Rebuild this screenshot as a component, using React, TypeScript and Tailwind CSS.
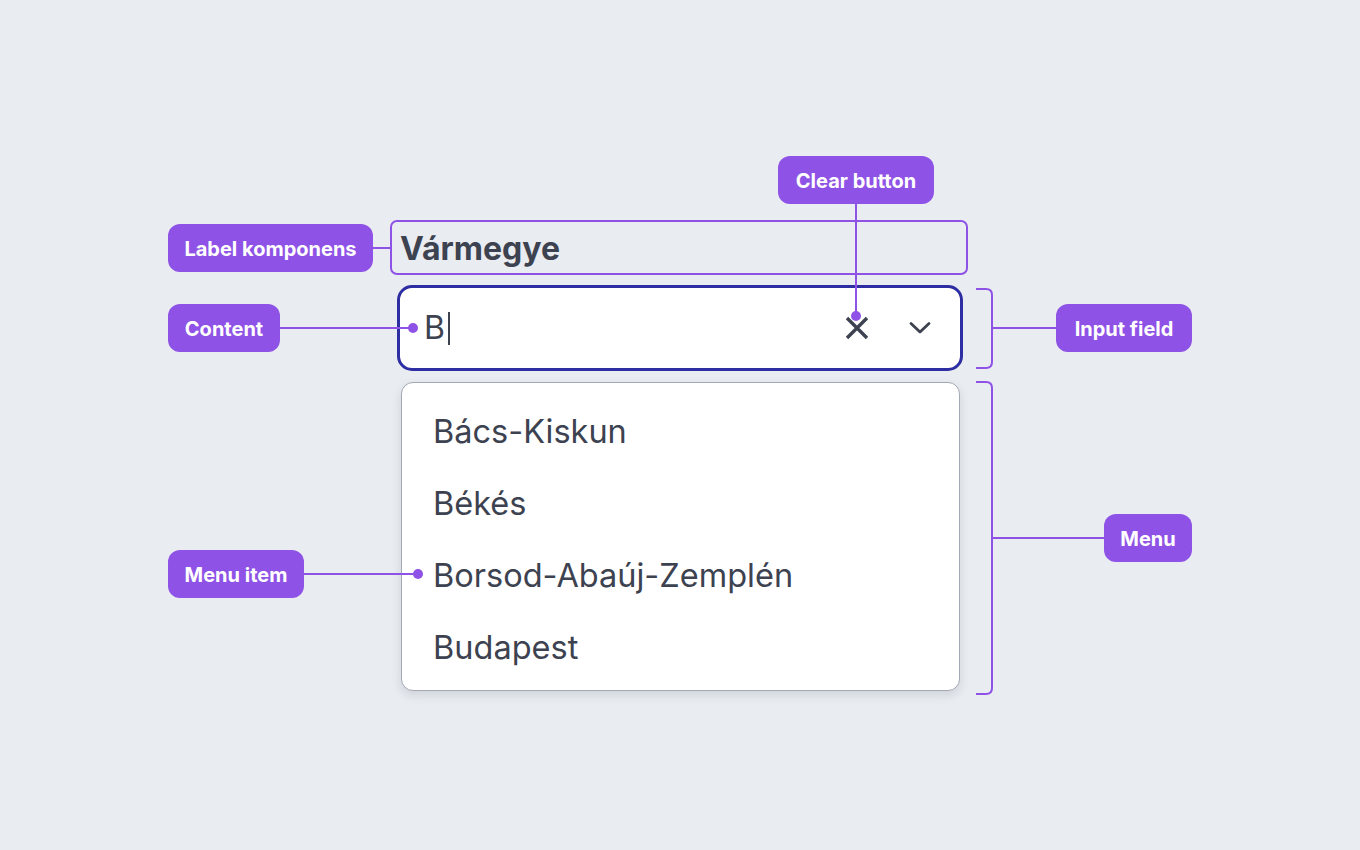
import React from "react";

const P = "#8f52e6";

function Callout({ text, className }: { text: string; className: string }) {
  return (
    <div
      className={`absolute flex h-[48px] items-center justify-center rounded-[12px] bg-[#8f52e6] pt-[2px] text-[20px] font-bold leading-none text-white ${className}`}
    >
      {text}
    </div>
  );
}

export default function App() {
  return (
    <div
      className="relative h-[850px] w-[1360px] overflow-hidden bg-[#e9ecf1]"
      style={{ fontFamily: "Inter, 'Noto Sans', sans-serif" }}
    >
      {/* Main component */}
      <div className="flex flex-col pl-[390px] pt-[220px]">
        <div className="flex h-[55px] w-[578px] items-center rounded-[7px] border-2 border-[#8f52e6] pl-[8px] pt-[2px]">
          <span className="text-[32px] font-bold leading-none text-[#3d4250]">Vármegye</span>
        </div>
        <div className="ml-[7px] mt-[10px] flex h-[86px] w-[566px] items-center rounded-[15px] border-[3px] border-[#2e2ea3] bg-white pl-[24px] pr-[29px]">
          <span className="text-[32px] leading-none text-[#3d4250]">B</span>
          <span className="ml-[3px] h-[33px] w-[2px] bg-[#3d4250]" />
          <div className="flex-1" />
          <svg width="24" height="24" viewBox="0 0 24 24" className="mr-[40px]">
            <path d="M2 2 L22 22 M22 2 L2 22" stroke="#3d4250" strokeWidth="3.4" strokeLinecap="butt" fill="none" />
          </svg>
          <svg width="22" height="14" viewBox="0 0 22 14">
            <path d="M2 2.5 L11 11 L20 2.5" stroke="#3d4250" strokeWidth="2.8" fill="none" strokeLinecap="round" strokeLinejoin="round" />
          </svg>
        </div>
        <div className="ml-[11px] mt-[11px] flex w-[559px] flex-col rounded-[12px] border-[1.5px] border-[#a3a8b4] bg-white pb-[6px] pl-[31px] pt-[13px] shadow-[0_4px_10px_rgba(60,70,90,0.15)]">
          {["Bács-Kiskun", "Békés", "Borsod-Abaúj-Zemplén", "Budapest"].map((t) => (
            <div key={t} className="flex h-[72px] items-center text-[32.5px] leading-none text-[#3d4250]">
              {t}
            </div>
          ))}
        </div>
      </div>

      {/* Callouts */}
      <Callout text="Label komponens" className="left-[168px] top-[224px] w-[205px]" />
      <Callout text="Content" className="left-[168px] top-[304px] w-[112px]" />
      <Callout text="Menu item" className="left-[168px] top-[550px] w-[136px]" />
      <Callout text="Clear button" className="left-[778px] top-[156px] w-[156px]" />
      <Callout text="Input field" className="left-[1056px] top-[304px] w-[136px]" />
      <Callout text="Menu" className="left-[1104px] top-[514px] w-[88px]" />

      {/* Connectors */}
      <svg className="pointer-events-none absolute left-0 top-0" width="1360" height="850">
        <g stroke={P} strokeWidth="2" fill="none">
          <line x1="373" y1="248" x2="391" y2="248" />
          <line x1="280" y1="328" x2="413" y2="328" />
          <line x1="304" y1="574" x2="418" y2="574" />
          <line x1="856" y1="204" x2="856" y2="316" />
          <path d="M976 289 H986 Q992 289 992 295 V362 Q992 368 986 368 H976" />
          <line x1="992" y1="328" x2="1056" y2="328" />
          <path d="M976 382 H986 Q992 382 992 388 V688 Q992 694 986 694 H976" />
          <line x1="992" y1="538" x2="1104" y2="538" />
        </g>
        <g fill={P}>
          <circle cx="413" cy="328" r="5" />
          <circle cx="418" cy="574" r="5" />
          <circle cx="856" cy="316" r="5" />
        </g>
      </svg>
    </div>
  );
}
